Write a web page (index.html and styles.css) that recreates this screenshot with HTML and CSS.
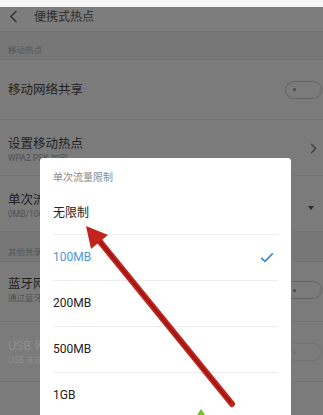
FILE: index.html
```html
<!DOCTYPE html>
<html lang="zh-CN">
<head>
<meta charset="utf-8">
<title>便携式热点</title>
<link rel="stylesheet" href="styles.css">
</head>
<body>
<div class="screen">
  <div class="status"></div>
  <div class="header">
    <svg class="back" width="9" height="13" viewBox="0 0 9 13"><path d="M7.5 1 L1.8 6.5 L7.5 12" fill="none" stroke="#2e2e2e" stroke-width="1.3"/></svg>
    <span class="title">便携式热点</span>
  </div>
  <div class="section s1">移动热点</div>
  <div class="row single r1">
    <span class="t">移动网络共享</span>
    <span class="toggle"><span class="knob"></span></span>
  </div>
  <div class="row double r2">
    <div class="txt"><div class="t">设置移动热点</div><div class="s">WPA2 PSK 加密</div></div>
    <svg class="chev" width="7" height="11" viewBox="0 0 7 11"><path d="M1.2 1 L5.6 5.5 L1.2 10" fill="none" stroke="#3a3a3a" stroke-width="1.2"/></svg>
  </div>
  <div class="row double r3">
    <div class="txt"><div class="t">单次流量限制</div><div class="s">0MB/100MB</div></div>
    <svg class="drop" width="6" height="4" viewBox="0 0 6 4"><path d="M0 0 H6 L3 4 Z" fill="#2a2a2a"/></svg>
  </div>
  <div class="section s2">其他共享方式</div>
  <div class="row double r4">
    <div class="txt"><div class="t">蓝牙网络共享</div><div class="s">通过蓝牙共享</div></div>
    <span class="toggle"><span class="knob"></span></span>
  </div>
  <div class="row double r5 disabled">
    <div class="txt"><div class="t">USB 网络共享</div><div class="s">USB 未连接</div></div>
    <span class="toggle"><span class="knob"></span></span>
  </div>
  <div class="row r6"></div>
</div>

<div class="dialog">
  <div class="dtitle">单次流量限制</div>
  <div class="item">无限制</div>
  <div class="item selected"><span>100MB</span>
    <svg class="check" width="14" height="11" viewBox="0 0 14 11"><path d="M1.2 5.8 L5 9.4 L12.8 1.4" fill="none" stroke="#3a86c8" stroke-width="1.6"/></svg>
  </div>
  <div class="item">200MB</div>
  <div class="item">500MB</div>
  <div class="item">1GB</div>
</div>

<svg class="arrow" width="323" height="415" viewBox="0 0 323 415">
  <line x1="232" y1="404" x2="97" y2="238" stroke="#c2241d" stroke-width="6" stroke-linecap="round"/>
  <line x1="231" y1="403" x2="97" y2="238" stroke="#9a1812" stroke-width="2"/>
  <polygon points="86,226 108,235 91,249" fill="#c2241d"/>
  <polygon points="201,409 205,415 197,415" fill="#72c02a"/>
</svg>
</body>
</html>
```

FILE: styles.css
```css
html, body {
  margin: 0;
  padding: 0;
  width: 323px;
  height: 415px;
  overflow: hidden;
}
body {
  position: relative;
  background: #7b7b7b;
  font-family: Roboto, "Noto Sans CJK SC", sans-serif;
  color: #222;
}
.screen {
  display: flex;
  flex-direction: column;
}
.status {
  height: 7px;
  background: #f6f6f6;
}
.header {
  height: 25px;
  box-sizing: border-box;
  display: flex;
  align-items: flex-start;
  padding-top: 3px;
  background: #7d7d7d;
  border-bottom: 1px solid #727272;
}
.back {
  margin-left: 9px;
}
.title {
  margin-left: 16px;
  font-size: 12px;
  line-height: 14px;
  color: #2c2c2c;
}
.section {
  box-sizing: border-box;
  background: #777;
  font-size: 8.5px;
  line-height: 10px;
  color: #555;
  padding-left: 8px;
  border-bottom: 1px solid #727272;
}
.s1 { height: 28px; padding-top: 13px; }
.s2 { height: 30px; padding-top: 15px; }
.row {
  box-sizing: border-box;
  display: flex;
  justify-content: space-between;
  padding-left: 8px;
  border-bottom: 1px solid #737373;
}
.row .t {
  font-size: 12.5px;
  line-height: 14px;
  color: #1f1f1f;
}
.row .s {
  font-size: 8.5px;
  line-height: 12px;
  color: #4f4f4f;
  margin-top: 1px;
}
.single { height: 60px; align-items: center; }
.double { align-items: flex-start; padding-top: 17px; }
.r2, .r3 { height: 56px; }
.r4, .r5 { height: 60px; }
.r4 { padding-top: 15px; }
.r6 { height: 33px; border-bottom: none; }
.toggle {
  width: 37px;
  height: 18px;
  box-sizing: border-box;
  border: 1.5px solid #646464;
  border-radius: 9px;
  margin-right: 1px;
  display: flex;
  align-items: center;
  padding-left: 7px;
}
.knob {
  width: 3px;
  height: 3px;
  border-radius: 50%;
  background: #4a4a4a;
}
.r4 .toggle { margin-top: 4px; }
.r5 .toggle { margin-top: 4px; border-color: #727272; }
.r5 .knob { background: #6e6e6e; }
.disabled .t, .disabled .s { color: #8e8e8e; }
.chev { margin-right: 6px; margin-top: 6px; }
.drop { margin-right: 9px; margin-top: 13px; }

.dialog {
  position: absolute;
  left: 40px;
  top: 158px;
  width: 251px;
  height: 257px;
  overflow: hidden;
  background: #fff;
  border-radius: 3px 3px 0 0;
  box-sizing: border-box;
  padding: 0 13px;
}
.dtitle {
  font-size: 10px;
  line-height: 14px;
  color: #8a8a8a;
  padding-top: 13px;
  padding-bottom: 4px;
}
.item {
  height: 46px;
  box-sizing: border-box;
  border-bottom: 1px solid #ececec;
  display: flex;
  align-items: center;
  justify-content: space-between;
  font-size: 12px;
  color: #222;
  padding-bottom: 1px;
}
.selected { color: #4a98dc; }
.check { margin-right: 4px; }
.arrow {
  position: absolute;
  left: 0;
  top: 0;
}
```
